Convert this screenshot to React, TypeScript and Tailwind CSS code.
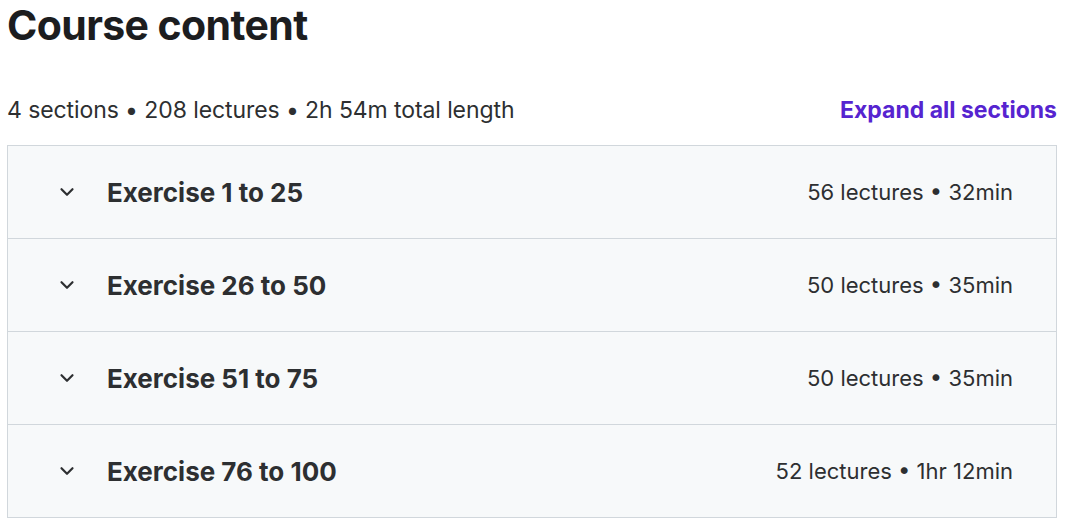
import { ChevronDown } from "lucide-react";

const SECTIONS = [
  { title: "Exercise 1 to 25", meta: "56 lectures • 32min" },
  { title: "Exercise 26 to 50", meta: "50 lectures • 35min" },
  { title: "Exercise 51 to 75", meta: "50 lectures • 35min" },
  { title: "Exercise 76 to 100", meta: "52 lectures • 1hr 12min" },
];

export default function App() {
  return (
    <div className="min-h-screen bg-white pl-[7px] pr-[9px] pt-[1px] text-[#2d2f31] font-['Inter',sans-serif]">
      <h2 className="text-[41px] font-bold leading-[48px] tracking-[-0.015em] text-[#1c1d1f]">
        Course content
      </h2>

      <div className="mt-[48px] flex items-center justify-between">
        <p className="text-[23px] leading-[26px] text-[#2d2f31] tracking-[-0.004em]">
          4 sections • 208 lectures • 2h 54m total length
        </p>
        <button className="text-[23px] font-bold leading-[26px] text-[#5624d0]">
          Expand all sections
        </button>
      </div>

      <div className="mt-[22px] border border-[#d1d7dc]">
        {SECTIONS.map((s, i) => (
          <div
            key={s.title}
            className={
              i > 0
                ? "flex h-[93px] items-center justify-between border-t border-[#d1d7dc] bg-[#f7f9fa] pl-[48px] pr-[43px]"
                : "flex h-[92px] items-center justify-between bg-[#f7f9fa] pl-[48px] pr-[43px]"
            }
          >
            <div className="flex items-center gap-[29px]">
              <ChevronDown size={22} strokeWidth={2.4} className="text-[#2d2f31]" />
              <span className="text-[26px] font-bold text-[#2d2f31]">{s.title}</span>
            </div>
            <span className="text-[22px] text-[#2d2f31]">{s.meta}</span>
          </div>
        ))}
      </div>
    </div>
  );
}
